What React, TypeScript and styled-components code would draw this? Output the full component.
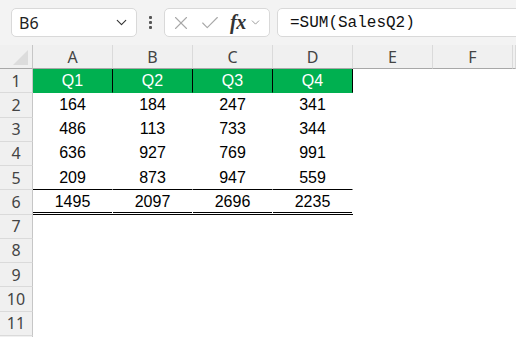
import React from 'react';
import styled, { createGlobalStyle } from 'styled-components';
import { ChevronDown, X, Check } from 'lucide-react';

const GlobalStyle = createGlobalStyle`
  html, body {
    margin: 0;
    padding: 0;
    background: #ffffff;
    overflow: hidden;
  }
`;

const Page = styled.div`
  width: 516px;
  height: 337px;
  overflow: hidden;
  background: #ffffff;
`;

const Toolbar = styled.div`
  display: flex;
  align-items: center;
  height: 45px;
  padding-left: 11px;
  background: #f3f3f3;
  font-family: 'Noto Sans', 'Open Sans', sans-serif;
  box-sizing: border-box;
`;

const Box = styled.div<{ $width?: number }>`
  display: flex;
  align-items: center;
  box-sizing: border-box;
  height: 29px;
  background: #ffffff;
  border: 1px solid #d9d9d9;
  border-radius: 5px;
  ${(p) => (p.$width ? `width: ${p.$width}px;` : 'flex: 1; margin-right: -12px;')}
`;

const NameBox = styled(Box)`
  justify-content: space-between;
  padding: 0 6px 0 7px;
  font-size: 16px;
  color: #222;
`;

const Grip = styled.div`
  display: flex;
  flex-direction: column;
  align-items: center;
  gap: 2px;
  width: 27px;
  span {
    width: 3px;
    height: 3px;
    border-radius: 1px;
    background: #555;
  }
`;

const FxBox = styled(Box)`
  padding-left: 5px;
`;

const FxText = styled.span`
  font-family: 'Liberation Serif', serif;
  font-style: italic;
  font-weight: bold;
  font-size: 20px;
  color: #333;
  margin: 0 3px 0 9px;
  letter-spacing: -0.5px;
`;

const FormulaBox = styled(Box)`
  margin-left: 7px;
  padding-left: 12px;
  font-family: 'Liberation Mono', monospace;
  font-size: 16px;
  color: #111;
`;

const Sheet = styled.div`
  display: grid;
  grid-template-columns: 33px repeat(6, 80px) 1fr;
  grid-template-rows: 24px repeat(12, 24.25px);
`;

const Corner = styled.div`
  position: relative;
  background: #f0f0f0;
  border-right: 1px solid #c6c6c6;
  border-bottom: 1px solid #a8a8a8;
  box-sizing: border-box;
  &::after {
    content: '';
    position: absolute;
    right: 4px;
    bottom: 3px;
    border-style: solid;
    border-width: 0 0 15px 15px;
    border-color: transparent transparent #dcdcdc transparent;
  }
`;

const ColHead = styled.div`
  display: flex;
  align-items: center;
  justify-content: center;
  background: #f0f0f0;
  border-right: 1px solid #dadada;
  border-bottom: 1px solid #a8a8a8;
  box-sizing: border-box;
  font-family: 'Noto Sans', 'Open Sans', sans-serif;
  font-size: 16px;
  color: #444;
  padding-top: 1px;
`;

const RowHead = styled.div`
  display: flex;
  align-items: center;
  justify-content: center;
  background: #f0f0f0;
  border-right: 1px solid #c6c6c6;
  border-bottom: 1px solid #dadada;
  box-sizing: border-box;
  font-family: 'Noto Sans', 'Open Sans', sans-serif;
  font-size: 16px;
  color: #444;
`;

type Edge = 'none' | 'thin' | 'double';

const Cell = styled.div<{ $green?: boolean; $edge?: Edge; $rule?: boolean }>`
  display: flex;
  align-items: center;
  justify-content: center;
  box-sizing: border-box;
  font-family: 'Liberation Sans', Arial, sans-serif;
  font-size: 16px;
  color: ${(p) => (p.$green ? '#ffffff' : '#000000')};
  background: ${(p) => (p.$green ? '#00b050' : '#ffffff')};
  border-right: 1px solid ${(p) => (p.$rule ? '#000000' : 'transparent')};
  border-bottom: ${(p) =>
    p.$edge === 'double' ? '3px double #000000' : p.$edge === 'thin' ? '1px solid #000000' : '1px solid transparent'};
  padding-top: ${(p) => (p.$edge === 'double' ? '2px' : '0')};
`;

const columns = ['A', 'B', 'C', 'D', 'E', 'F'];

const data: (string | number)[][] = [
  ['Q1', 'Q2', 'Q3', 'Q4'],
  [164, 184, 247, 341],
  [486, 113, 733, 344],
  [636, 927, 769, 991],
  [209, 873, 947, 559],
  [1495, 2097, 2696, 2235],
];

const App: React.FC = () => {
  const rows = Array.from({ length: 12 }, (_, i) => i + 1);
  return (
    <Page>
      <GlobalStyle />
      <Toolbar>
        <NameBox $width={126}>
          B6
          <ChevronDown size={17} strokeWidth={1.6} color="#333" />
        </NameBox>
        <Grip>
          <span />
          <span />
          <span />
        </Grip>
        <FxBox $width={106}>
          <X size={22} strokeWidth={1.2} color="#a8a8a8" />
          <Check size={22} strokeWidth={1.2} color="#a8a8a8" style={{ marginLeft: 7 }} />
          <FxText>fx</FxText>
          <ChevronDown size={13} strokeWidth={1.5} color="#888" />
        </FxBox>
        <FormulaBox>=SUM(SalesQ2)</FormulaBox>
      </Toolbar>
      <Sheet>
        <Corner />
        {columns.map((c) => (
          <ColHead key={c}>{c}</ColHead>
        ))}
        <ColHead />
        {rows.map((r) => {
          const values = data[r - 1];
          return (
            <React.Fragment key={r}>
              <RowHead>{r < 12 ? r : ''}</RowHead>
              {columns.map((c, ci) => {
                const inTable = values !== undefined && ci < 4;
                const edge: Edge = inTable && r === 5 ? 'thin' : inTable && r === 6 ? 'double' : 'none';
                return (
                  <Cell key={c} $green={r === 1 && ci < 4} $rule={r === 1 && ci < 4} $edge={edge}>
                    {inTable ? values[ci] : ''}
                  </Cell>
                );
              })}
              <Cell />
            </React.Fragment>
          );
        })}
      </Sheet>
    </Page>
  );
};

export default App;
